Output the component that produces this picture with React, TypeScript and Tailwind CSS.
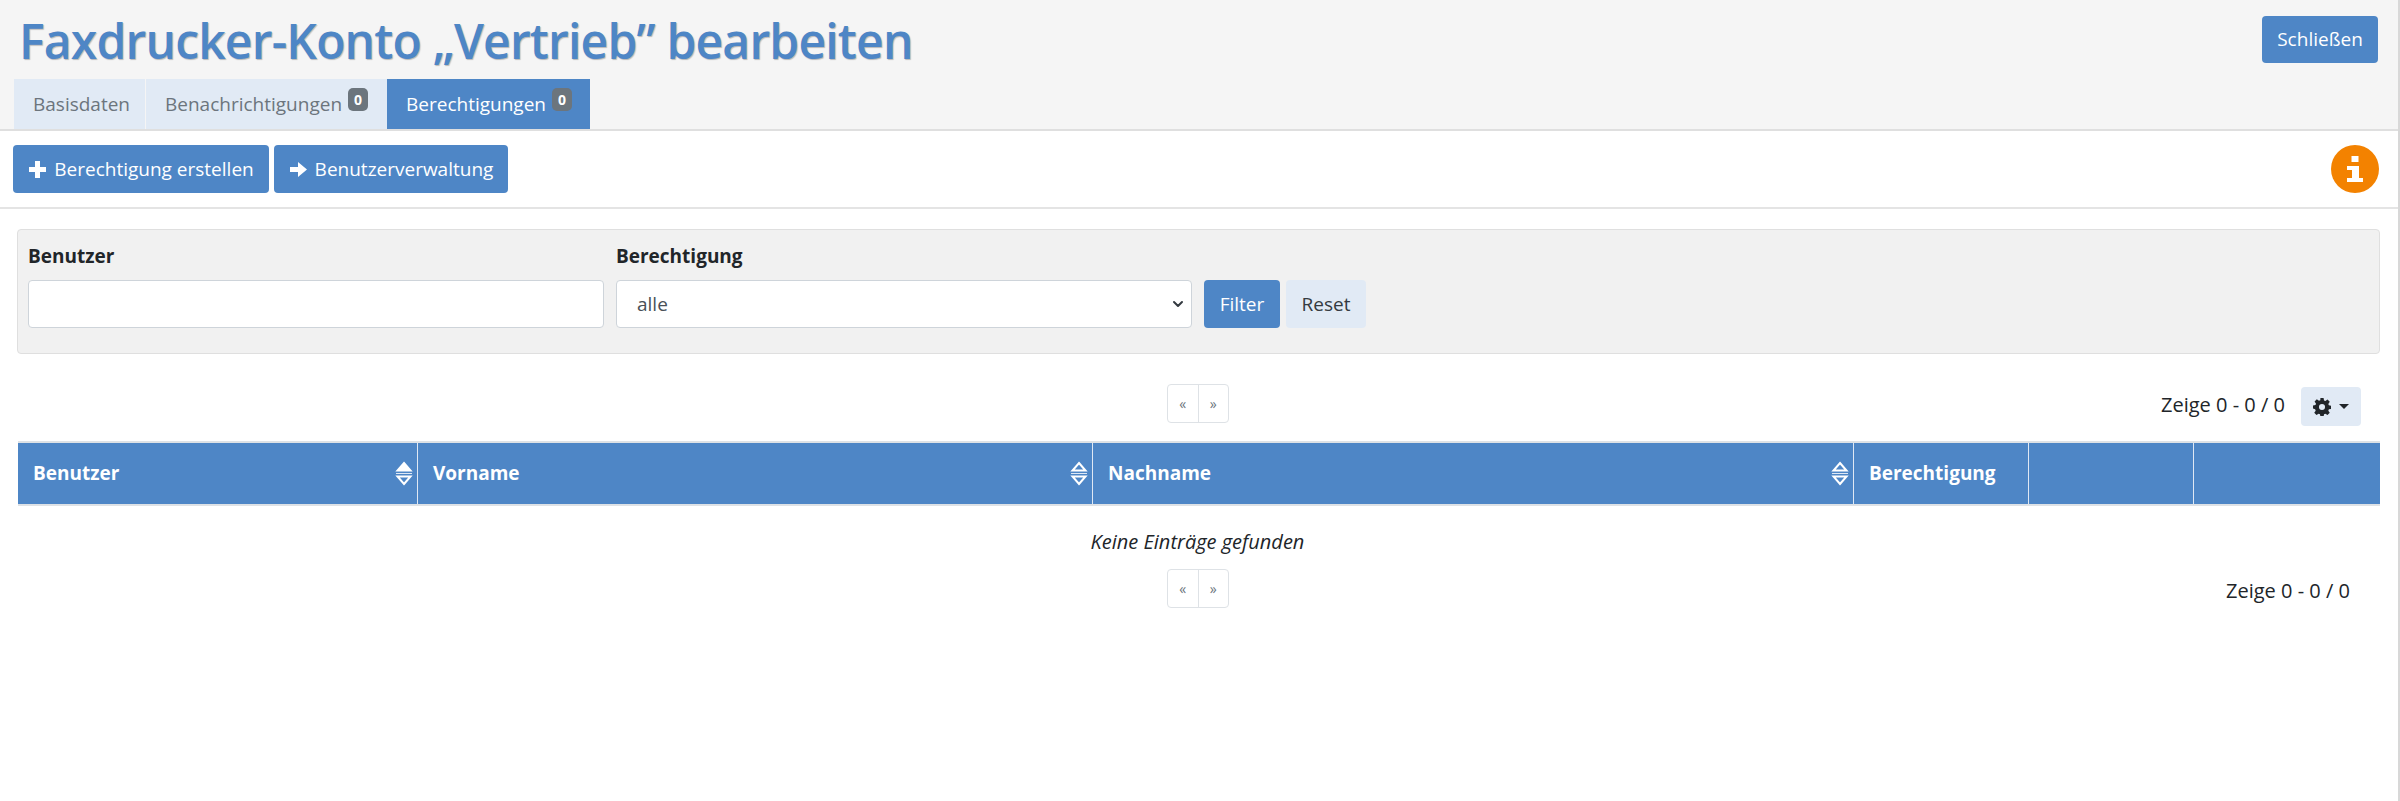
import React from "react";
import { ChevronDown } from "lucide-react";

const SANS = "font-['Open_Sans','Noto_Sans',sans-serif]";

const SortIcon = ({ active }: { active?: boolean }) => (
  <svg width="18" height="25" viewBox="0 0 18 25" className="shrink-0" fill="none">
    <path d="M9 2 15.500 9.500H2.500Z" stroke="#fff" strokeWidth="2" fill={active ? "#fff" : "none"} />
    <path d="M9 23 15.500 15.500H2.500Z" stroke="#fff" strokeWidth="2" fill="none" />
    <path d="M1 12.500H17" stroke="#dfe8f4" strokeWidth="1" />
  </svg>
);

const Pager = () => (
  <div className="flex h-[39px] w-[62px] rounded-[4px] border border-[#dee2e6] text-[14px] text-[#6c757d]">
    <span className="flex flex-1 items-center justify-center border-r border-[#dee2e6]">«</span>
    <span className="flex flex-1 items-center justify-center">»</span>
  </div>
);

const Badge = () => (
  <span className="mb-[9px] ml-[6px] flex h-[23px] w-[20px] items-center justify-center rounded-[5px] bg-[#6c757d] text-[14px] font-bold text-white">
    0
  </span>
);

const PlusIcon = () => (
  <svg width="19" height="19" viewBox="0 0 19 19" fill="#fff">
    <path d="M7 1h5v6h6v5h-6v6H7v-6H1V7h6z" />
  </svg>
);

const ArrowIcon = () => (
  <svg width="19" height="19" viewBox="0 0 19 19" fill="#fff">
    <path d="M1 7h8V2l9 7.500L9 17v-5H1z" />
  </svg>
);

const GearIcon = () => (
  <svg width="18" height="18" viewBox="0 0 16 16" fill="#212529">
    <path
      fillRule="evenodd"
      d="M6.600 0h2.800l.4 2.200 1.200.5L12.900 1.400l2 2-1.300 1.900.5 1.200 2.200.4v2.800l-2.200.4-.5 1.200 1.300 1.900-2 2-1.900-1.300-1.200.5-.4 2.200H6.600l-.4-2.200-1.200-.5-1.900 1.300-2-2 1.300-1.900-.5-1.200L0 9.400V6.600l2.200-.4.5-1.200L1.400 3.100l2-2 1.900 1.300 1.200-.5zM8 5.300a2.700 2.700 0 1 0 0 5.400 2.700 2.700 0 0 0 0-5.400z"
    />
  </svg>
);

const columns = [
  { title: "Benutzer", width: "w-[400px]", sort: true, active: true },
  { title: "Vorname", width: "w-[675px]", sort: true, active: false },
  { title: "Nachname", width: "w-[761px]", sort: true, active: false },
  { title: "Berechtigung", width: "w-[175px]", sort: false, active: false },
  { title: "", width: "w-[165px]", sort: false, active: false },
  { title: "", width: "flex-1", sort: false, active: false },
];

export default function App() {
  return (
    <div className={`${SANS} h-[801px] w-[2400px] overflow-hidden border-r-2 border-[#d8d8d8] bg-white text-[19px] text-[#212529]`}>
      {/* header */}
      <div className="border-b-2 border-[#dfdfdf] bg-[#f5f5f5]">
        <div className="flex h-[79px] items-start justify-between pr-[20px] pl-[19px]">
          <h1 className="mt-[9px] text-[48px] leading-[64px] font-semibold tracking-[-0.8px] whitespace-nowrap text-[#4e86c6] [text-shadow:1px_1px_1px_rgba(0,0,0,0.25)]">
            Faxdrucker-Konto „Vertrieb” bearbeiten
          </h1>
          <button className="mt-[16px] h-[47px] w-[116px] rounded-[4px] bg-[#4e86c6] text-white">Schließen</button>
        </div>
        <div className="flex h-[50px] pl-[14px] whitespace-nowrap text-[#6c757d]">
          <div className="flex w-[131px] items-center bg-[#e1eaf5] pl-[19px]">Basisdaten</div>
          <div className="ml-px flex w-[241px] items-center bg-[#e1eaf5] pl-[19px]">
            Benachrichtigungen
            <Badge />
          </div>
          <div className="flex w-[203px] items-center bg-[#4e86c6] pl-[19px] text-white">
            Berechtigungen
            <Badge />
          </div>
        </div>
      </div>

      {/* toolbar */}
      <div className="flex h-[78px] items-center justify-between border-b-2 border-[#e4e4e4] pr-[19px] pl-[13px]">
        <div className="flex gap-[5px] whitespace-nowrap text-white">
          <button className="flex h-[48px] w-[256px] items-center justify-center gap-[7px] rounded-[4px] bg-[#4e86c6]">
            <PlusIcon />
            Berechtigung erstellen
          </button>
          <button className="flex h-[48px] w-[234px] items-center justify-center gap-[7px] rounded-[4px] bg-[#4e86c6]">
            <ArrowIcon />
            Benutzerverwaltung
          </button>
        </div>
        <div className="flex h-[48px] w-[48px] items-center justify-center rounded-full bg-[#f38200]">
          <svg width="22" height="28" viewBox="0 0 22 28" fill="#fff">
            <path d="M7.500 1h7v6h-7zM3 11h12v12h4v4H3v-4h5v-8H3z" />
          </svg>
        </div>
      </div>

      {/* filter */}
      <div className="mt-[20px] mr-[18px] ml-[17px] flex h-[125px] rounded-[4px] border border-[#dfdfdf] bg-[#f1f1f1] pt-[14px] pl-[10px]">
        <div className="w-[576px]">
          <label className="block h-[36px] leading-[24px] font-bold">Benutzer</label>
          <input className="h-[48px] w-full rounded-[4px] border border-[#ced4da] bg-white" />
        </div>
        <div className="ml-[12px] w-[576px]">
          <label className="block h-[36px] leading-[24px] font-bold">Berechtigung</label>
          <div className="flex h-[48px] w-full items-center justify-between rounded-[4px] border border-[#ced4da] bg-white pr-[5px] pl-[20px] text-[#495057]">
            alle
            <ChevronDown size={16} strokeWidth={3} className="text-[#343a40]" />
          </div>
        </div>
        <div className="mt-[36px] ml-[12px] flex h-[48px] gap-[6px]">
          <button className="w-[76px] rounded-[4px] bg-[#4e86c6] text-white">Filter</button>
          <button className="w-[80px] rounded-[4px] bg-[#e1eaf5] text-[#343a40]">Reset</button>
        </div>
      </div>

      {/* top pager row */}
      <div className="mt-[30px] mr-[37px] ml-[17px] flex h-[41px] items-start">
        <div className="ml-[1150px]">
          <Pager />
        </div>
        <span className="mt-[6px] ml-[932px] text-[20px] whitespace-nowrap">Zeige 0 - 0 / 0</span>
        <button className="mt-[3px] ml-auto flex h-[39px] w-[60px] items-center justify-center gap-[8px] rounded-[4px] bg-[#e1eaf5] pr-[1px]">
          <GearIcon />
          <span className="h-0 w-0 border-x-[5px] border-t-[5px] border-x-transparent border-t-[#212529]" />
        </button>
      </div>

      {/* table */}
      <div className="mt-[16px] mr-[18px] ml-[18px] border-y-2 border-[#dee2e6]">
        <div className="flex h-[61px] bg-[#4e86c6] font-bold text-white">
          {columns.map((col, i) => (
            <div
              key={i}
              className={`${col.width} flex items-center justify-between border-r border-[#dfe8f4] pr-[4px] pl-[15px] last:border-r-0`}
            >
              <span className="whitespace-nowrap">{col.title}</span>
              {col.sort && <SortIcon active={col.active} />}
            </div>
          ))}
        </div>
      </div>

      <div className="mt-[21px] mr-[20px] ml-[17px] text-center text-[20px] italic">Keine Einträge gefunden</div>
      <div className="mt-[12px] mr-[18px] ml-[17px] flex items-start">
        <div className="ml-[1150px]">
          <Pager />
        </div>
        <span className="mt-[7px] ml-[997px] text-[20px] whitespace-nowrap">Zeige 0 - 0 / 0</span>
      </div>
    </div>
  );
}
